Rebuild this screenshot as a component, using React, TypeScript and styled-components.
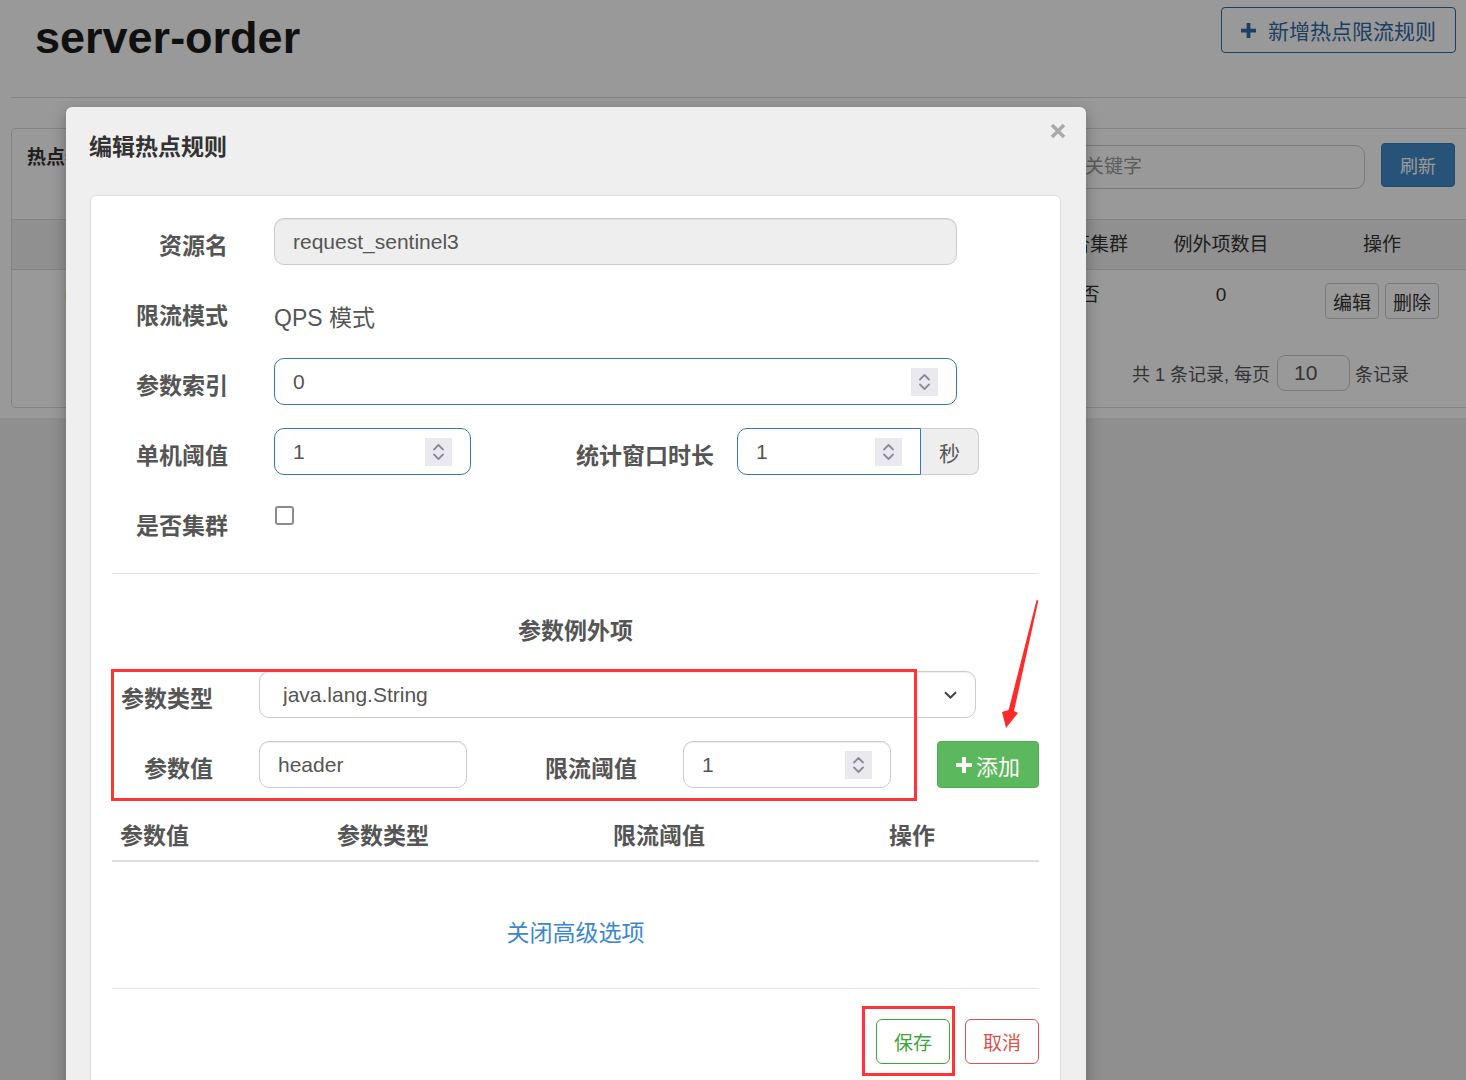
import React from 'react';
import styled, { createGlobalStyle } from 'styled-components';

const GlobalStyle = createGlobalStyle`
  * { box-sizing: border-box; }
  html, body { margin: 0; padding: 0; }
  body {
    font-family: "Liberation Sans", "Noto Sans CJK SC", sans-serif;
    background: #eeeeee;
    color: #333;
    overflow: hidden;
  }
`;

const Screen = styled.div`
  position: relative;
  width: 1466px;
  height: 1080px;
  overflow: hidden;
  background: #eeeeee;
`;

/* ---------- page behind the dialog ---------- */

const TopArea = styled.div`
  background: #fff;
  padding-bottom: 10px;
`;

const PageHeader = styled.header`
  display: flex;
  justify-content: space-between;
  align-items: flex-start;
  height: 98px;
  margin-left: 11px;
  padding: 0 10px 0 24px;
  border-bottom: 1px solid #dcdcdc;
`;

const PageTitle = styled.h1`
  margin: 0;
  padding-top: 15px;
  font-size: 45px;
  line-height: 45px;
  font-weight: 700;
  color: #1c1c1c;
`;

const AddRuleButton = styled.button`
  display: flex;
  align-items: center;
  justify-content: center;
  gap: 12px;
  margin-top: 7px;
  width: 235px;
  height: 46px;
  background: #fff;
  border: 1px solid #2e6da4;
  border-radius: 4px;
  color: #2f6aa6;
  font-family: inherit;
  font-size: 21px;
`;

const Panel = styled.section`
  margin: 30px -4px 0 11px;
  height: 280px;
  border: 1px solid #dddddd;
  border-radius: 4px;
  background: #fff;
`;

const PanelHeading = styled.div`
  display: flex;
  justify-content: space-between;
  align-items: flex-start;
  height: 90px;
  padding: 0 14px 0 15px;
`;

const PanelTitle = styled.h3`
  margin: 17px 0 0;
  font-size: 19px;
  line-height: 24px;
  font-weight: 700;
  color: #333;
`;

const Tools = styled.div`
  display: flex;
  align-items: flex-start;
  gap: 16px;
  margin-top: 14px;
`;

const SearchInput = styled.input`
  width: 350px;
  height: 44px;
  margin-top: 2px;
  padding: 0 12px;
  border: 1px solid #ccc;
  border-radius: 10px;
  font-family: inherit;
  font-size: 19px;
  &::placeholder { color: #999; }
`;

const RefreshButton = styled.button`
  width: 74px;
  height: 44px;
  background: #428bca;
  border: 1px solid #357ebd;
  border-radius: 4px;
  color: #fff;
  font-family: inherit;
  font-size: 18px;
`;

const RuleTable = styled.div`
  display: grid;
  grid-template-columns: repeat(4, 1fr) 114px 148px 174px;
`;

const RuleHead = styled.div`
  height: 51px;
  line-height: 49px;
  text-align: center;
  font-size: 19px;
  color: #333;
  background: #f0f0f0;
  border-top: 1px solid #dddddd;
  border-bottom: 1px solid #dddddd;
  white-space: nowrap;
  overflow: hidden;
`;

const RuleCell = styled.div`
  height: 70px;
  padding-top: 13px;
  line-height: 24px;
  text-align: center;
  font-size: 19px;
  color: #333;
  white-space: nowrap;
  overflow: hidden;
`;

const SmallButton = styled.button`
  height: 36px;
  margin: 0 3px;
  padding: 0 7px;
  background: #fff;
  border: 1px solid #ccc;
  border-radius: 4px;
  color: #333;
  font-family: inherit;
  font-size: 19px;
`;

const Pager = styled.div`
  display: flex;
  justify-content: flex-end;
  align-items: center;
  margin-top: 15px;
  padding-right: 60px;
  font-size: 18px;
  color: #555;
`;

const PageSize = styled.input`
  width: 73px;
  height: 36px;
  margin: 0 5px 0 7px;
  padding: 0 16px;
  border: 1px solid #ccc;
  border-radius: 8px;
  font-family: inherit;
  font-size: 21px;
  color: #555;
`;

/* ---------- dialog ---------- */

const Backdrop = styled.div`
  position: absolute;
  inset: 0;
  background: rgba(0, 0, 0, 0.4);
`;

const Modal = styled.div`
  position: absolute;
  top: 107px;
  left: 66px;
  width: 1020px;
  background: #efefef;
  border-radius: 6px;
  box-shadow: 0 5px 15px rgba(0, 0, 0, 0.3);
`;

const ModalHeader = styled.div`
  display: flex;
  justify-content: space-between;
  align-items: flex-start;
  height: 88px;
  padding: 16px 20px 0 23px;
`;

const ModalTitle = styled.h4`
  margin: 9px 0 0;
  font-size: 23px;
  line-height: 30px;
  font-weight: 700;
  color: #333;
`;

const CloseButton = styled.button`
  width: 16px;
  height: 16px;
  padding: 0;
  border: 0;
  background: none;
  display: flex;
`;

const Card = styled.div`
  margin: 0 25px 0 24px;
  padding: 22px 21px 40px;
  background: #fff;
  border: 1px solid #dcdcdc;
  border-radius: 6px;
`;

const Section = styled.div<{ $indent?: number }>`
  padding-left: ${({ $indent }) => $indent ?? 0}px;
`;

const FormRow = styled.div<{ $mb?: number }>`
  display: flex;
  align-items: flex-start;
  min-height: 47px;
  margin-bottom: ${({ $mb }) => $mb ?? 23}px;
`;

const Label = styled.label<{ $w?: number; $gap?: number }>`
  flex: none;
  width: ${({ $w }) => $w ?? 101}px;
  margin-right: ${({ $gap }) => $gap ?? 46}px;
  padding-top: 13px;
  line-height: 30px;
  font-size: 23px;
  font-weight: 700;
  color: #555;
  text-align: right;
  white-space: nowrap;
`;

const StaticValue = styled.div`
  padding-top: 15px;
  line-height: 30px;
  font-size: 23px;
  color: #555;
`;

type Tone = 'readonly' | 'active' | 'normal';

const toneStyles: Record<Tone, string> = {
  readonly: 'background: #eeeeee; border-color: #cccccc; box-shadow: inset 0 1px 1px rgba(0,0,0,.075);',
  active: 'background: #ffffff; border-color: #3478b8;',
  normal: 'background: #ffffff; border-color: #cccccc; box-shadow: inset 0 1px 1px rgba(0,0,0,.075);',
};

const Field = styled.div<{ $w: number; $tone?: Tone; $radius?: string; $pl?: number }>`
  flex: none;
  display: flex;
  align-items: center;
  width: ${({ $w }) => $w}px;
  height: 47px;
  padding: 0 18px 0 ${({ $pl }) => $pl ?? 18}px;
  border: 1px solid;
  border-radius: ${({ $radius }) => $radius ?? '10px'};
  ${({ $tone }) => toneStyles[$tone ?? 'normal']}
`;

const FieldInput = styled.input`
  flex: 1;
  min-width: 0;
  padding: 0;
  border: 0;
  outline: 0;
  background: transparent;
  font-family: inherit;
  font-size: 21px;
  color: #555;
`;

const FieldSelect = styled.select`
  flex: 1;
  min-width: 0;
  padding: 0;
  border: 0;
  outline: 0;
  appearance: none;
  background: transparent;
  font-family: inherit;
  font-size: 21px;
  color: #555;
`;

const Addon = styled.span`
  flex: none;
  display: flex;
  align-items: center;
  justify-content: center;
  width: 58px;
  height: 47px;
  background: #eeeeee;
  border: 1px solid #cccccc;
  border-left: 0;
  border-radius: 0 8px 8px 0;
  font-size: 21px;
  color: #555;
`;

const InputGroup = styled.div`
  display: flex;
`;

const Checkbox = styled.input`
  appearance: none;
  width: 19px;
  height: 19px;
  margin: 8px 0 0 1px;
  border: 2px solid #8a8a94;
  border-radius: 3px;
  background: #fff;
`;

const Divider = styled.hr<{ $mt: number }>`
  margin: ${({ $mt }) => $mt}px 0 0;
  border: 0;
  border-top: 1px solid #e5e5e5;
`;

const SubTitle = styled.h4`
  margin: 41px 0 24px;
  text-align: center;
  font-size: 23px;
  line-height: 32px;
  font-weight: 700;
  color: #555;
`;

const ExceptionGroup = styled.div`
  position: relative;
`;

const RedFrame = styled.span<{ $top: number; $left: number; $w: number; $h: number }>`
  position: absolute;
  top: ${({ $top }) => $top}px;
  left: ${({ $left }) => $left}px;
  width: ${({ $w }) => $w}px;
  height: ${({ $h }) => $h}px;
  border: 3px solid #ff3434;
  pointer-events: none;
`;

const Arrow = styled.svg`
  position: absolute;
  left: 883px;
  top: -76px;
  pointer-events: none;
`;

const AddButton = styled.button`
  flex: none;
  display: flex;
  align-items: center;
  justify-content: center;
  gap: 4px;
  width: 102px;
  height: 47px;
  margin-left: 46px;
  background: #5cb85c;
  border: 1px solid #4cae4c;
  border-radius: 4px;
  color: #fff;
  font-family: inherit;
  font-size: 22px;
`;

const ParamTable = styled.div`
  display: grid;
  grid-template-columns: 217px 276px 276px 1fr;
  margin-top: 24px;
  border-bottom: 2px solid #dddddd;
`;

const HeadCell = styled.div`
  padding: 0 8px;
  line-height: 48px;
  font-size: 23px;
  font-weight: 700;
  color: #555;
`;

const CollapseLink = styled.a`
  display: block;
  margin-top: 55px;
  text-align: center;
  font-size: 23px;
  line-height: 32px;
  color: #3a87cf;
  text-decoration: none;
`;

const Footer = styled.div`
  display: flex;
  justify-content: flex-end;
  gap: 15px;
  margin-top: 30px;
`;

const SaveWrap = styled.div`
  position: relative;
`;

const OutlineButton = styled.button<{ $color: string }>`
  width: 74px;
  height: 45px;
  background: #fff;
  border: 1px solid ${({ $color }) => $color};
  border-radius: 6px;
  color: ${({ $color }) => $color};
  font-family: inherit;
  font-size: 19px;
`;

/* ---------- icons ---------- */

const Spinner = () => (
  <svg width="27" height="28" viewBox="0 0 27 28">
    <rect width="27" height="28" fill="#e9e9ef" />
    <path
      d="M9 11.5 13.5 7 18 11.5M9 16.5 13.5 21 18 16.5"
      fill="none"
      stroke="#8b8b97"
      strokeWidth="1.8"
      strokeLinecap="round"
      strokeLinejoin="round"
    />
  </svg>
);

const Chevron = () => (
  <svg width="13" height="8" viewBox="0 0 13 8">
    <path d="M1 1.2 6.5 6.5 12 1.2" fill="none" stroke="#444" strokeWidth="2" />
  </svg>
);

const PlusIcon = ({ size, color }: { size: number; color: string }) => (
  <svg width={size} height={size} viewBox="0 0 16 16">
    <path d="M6 0h4v6h6v4h-6v6H6v-6H0V6h6z" fill={color} />
  </svg>
);

const CloseIcon = () => (
  <svg width="16" height="16" viewBox="0 0 16 16">
    <path d="M2 2 14 14M14 2 2 14" stroke="#a9a9a9" strokeWidth="3.4" />
  </svg>
);

const App: React.FC = () => {
  return (
    <Screen>
      <GlobalStyle />

      <TopArea>
        <PageHeader>
          <PageTitle>server-order</PageTitle>
          <AddRuleButton>
            <PlusIcon size={15} color="#2f6aa6" />
            新增热点限流规则
          </AddRuleButton>
        </PageHeader>

        <Panel>
          <PanelHeading>
            <PanelTitle>热点参数限流规则</PanelTitle>
            <Tools>
              <SearchInput placeholder="请输入关键字" />
              <RefreshButton>刷新</RefreshButton>
            </Tools>
          </PanelHeading>
          <RuleTable>
            {['资源名', '参数索引', '流控模式', '单机阈值', '是否集群', '例外项数目', '操作'].map((h) => (
              <RuleHead key={h}>{h}</RuleHead>
            ))}
            <RuleCell>request_sentinel3</RuleCell>
            <RuleCell>0</RuleCell>
            <RuleCell>QPS</RuleCell>
            <RuleCell>1</RuleCell>
            <RuleCell>否</RuleCell>
            <RuleCell>0</RuleCell>
            <RuleCell>
              <SmallButton>编辑</SmallButton>
              <SmallButton>删除</SmallButton>
            </RuleCell>
          </RuleTable>
          <Pager>
            共 1 条记录, 每页
            <PageSize defaultValue="10" />
            条记录
          </Pager>
        </Panel>
      </TopArea>

      <Backdrop />

      <Modal>
        <ModalHeader>
          <ModalTitle>编辑热点规则</ModalTitle>
          <CloseButton aria-label="close">
            <CloseIcon />
          </CloseButton>
        </ModalHeader>

        <Card>
          <Section $indent={15}>
            <FormRow>
              <Label>资源名</Label>
              <Field $w={683} $tone="readonly">
                <FieldInput readOnly defaultValue="request_sentinel3" />
              </Field>
            </FormRow>
            <FormRow>
              <Label>限流模式</Label>
              <StaticValue>QPS 模式</StaticValue>
            </FormRow>
            <FormRow>
              <Label>参数索引</Label>
              <Field $w={683} $tone="active">
                <FieldInput defaultValue="0" />
                <Spinner />
              </Field>
            </FormRow>
            <FormRow>
              <Label>单机阈值</Label>
              <Field $w={197} $tone="active">
                <FieldInput defaultValue="1" />
                <Spinner />
              </Field>
              <Label $w={243} $gap={23}>统计窗口时长</Label>
              <InputGroup>
                <Field $w={184} $tone="active" $radius="10px 0 0 10px">
                  <FieldInput defaultValue="1" />
                  <Spinner />
                </Field>
                <Addon>秒</Addon>
              </InputGroup>
            </FormRow>
            <FormRow>
              <Label>是否集群</Label>
              <Checkbox type="checkbox" />
            </FormRow>
          </Section>

          <Divider $mt={28} />

          <SubTitle>参数例外项</SubTitle>

          <ExceptionGroup>
            <FormRow>
              <Label>参数类型</Label>
              <Field $w={717} $pl={23}>
                <FieldSelect defaultValue="java.lang.String">
                  <option>java.lang.String</option>
                  <option>int</option>
                  <option>long</option>
                </FieldSelect>
                <Chevron />
              </Field>
            </FormRow>
            <FormRow $mb={0}>
              <Label>参数值</Label>
              <Field $w={208}>
                <FieldInput defaultValue="header" />
              </Field>
              <Label $w={170}>限流阈值</Label>
              <Field $w={208}>
                <FieldInput defaultValue="1" />
                <Spinner />
              </Field>
              <AddButton>
                <PlusIcon size={16} color="#fff" />
                添加
              </AddButton>
            </FormRow>
            <RedFrame $top={-2} $left={-1} $w={806} $h={132} />
            <Arrow width="50" height="140" viewBox="0 0 50 140">
              <path d="M41.6 5 43.4 5.6 19 116 23 118 11 133 7 117 13.6 115Z" fill="#ff2a2a" />
            </Arrow>
          </ExceptionGroup>

          <ParamTable>
            <HeadCell>参数值</HeadCell>
            <HeadCell>参数类型</HeadCell>
            <HeadCell>限流阈值</HeadCell>
            <HeadCell>操作</HeadCell>
          </ParamTable>

          <CollapseLink href="#">关闭高级选项</CollapseLink>

          <Divider $mt={39} />

          <Footer>
            <SaveWrap>
              <OutlineButton $color="#3ca63c">保存</OutlineButton>
              <RedFrame $top={-13} $left={-14} $w={93} $h={70} />
            </SaveWrap>
            <OutlineButton $color="#d9534f">取消</OutlineButton>
          </Footer>
        </Card>
      </Modal>
    </Screen>
  );
};

export default App;
